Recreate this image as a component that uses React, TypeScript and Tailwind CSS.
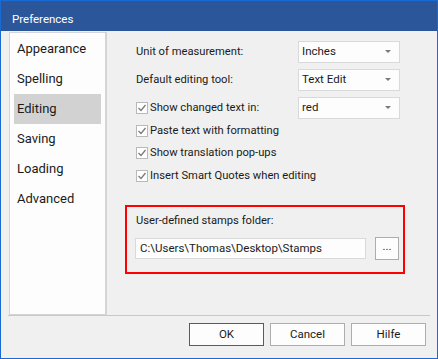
import React from "react";

const font = { fontFamily: 'Roboto, "Open Sans", Arial, sans-serif' };

function Dropdown({ value }: { value: string }) {
  return (
    <div className="w-[102px] h-[22px] bg-[#fdfdfd] border border-[#d9d9d9] flex items-center justify-between pl-[3px] pr-[8px] text-[11.5px] text-[#1b1b1b]">
      <span>{value}</span>
      <svg width="6" height="4" viewBox="0 0 6 4">
        <path d="M0 0 H6 L3 3 Z" fill="#7a7a7a" />
      </svg>
    </div>
  );
}

function Check() {
  return (
    <div className="w-[12px] h-[12px] border border-[#b9b9b9] bg-white flex items-center justify-center shrink-0">
      <svg width="10" height="10" viewBox="0 0 10 10">
        <path d="M1.5 5 L4 7.5 L8.5 2" stroke="#7a7a7a" strokeWidth="1.3" fill="none" />
      </svg>
    </div>
  );
}

function CheckRow({ label, className = "" }: { label: string; className?: string }) {
  return (
    <div className={"h-[22px] flex items-center " + className}>
      <Check />
      <span className="ml-[2px] text-[11.2px] text-[#1b1b1b]">{label}</span>
    </div>
  );
}

function Btn({ label, primary = false }: { label: string; primary?: boolean }) {
  return (
    <div
      className={
        "w-[75px] h-[23px] flex items-center justify-center bg-[#fdfdfd] text-[11.5px] text-[#1b1b1b] border " +
        (primary ? "border-[#1a66cc]" : "border-[#adadad]")
      }
    >
      {label}
    </div>
  );
}

export default function App() {
  const items = ["Appearance", "Spelling", "Editing", "Saving", "Loading", "Advanced"];
  return (
    <div style={font} className="w-[438px] h-[359px] border border-[#1a6ad4] bg-[#f0f0f0] flex flex-col overflow-hidden">
      <div className="h-[30px] bg-[#2b579a] flex items-center pl-[11px] pt-[8px] shrink-0">
        <span className="text-white text-[11.5px]">Preferences</span>
      </div>
      <div className="flex flex-1">
        <div className="ml-[8px] mt-[1px] w-[98px] h-[283px] bg-[#fdfdfd] border border-[#d4d4d4] border-r-2 pt-[1px] px-[4px] flex flex-col">
          {items.map((it) => (
            <div
              key={it}
              className={
                "h-[30px] flex items-center pl-[3px] text-[13px] text-[#1b1b1b] " +
                (it === "Editing" ? "bg-[#d2d2d2]" : "")
              }
            >
              {it}
            </div>
          ))}
        </div>
        <div className="pl-[18px] pt-[10px] flex flex-col">
          <div className="pl-[11px] flex flex-col">
            <div className="h-[22px] flex items-center">
              <span className="w-[162px] text-[11.2px] text-[#1b1b1b]">Unit of measurement:</span>
              <Dropdown value="Inches" />
            </div>
            <div className="h-[22px] flex items-center mt-[6px]">
              <span className="w-[162px] text-[11.2px] text-[#1b1b1b]">Default editing tool:</span>
              <Dropdown value="Text Edit" />
            </div>
            <div className="h-[22px] flex items-center mt-[6px]">
              <div className="w-[162px] flex items-center">
                <Check />
                <span className="ml-[2px] text-[11.2px] text-[#1b1b1b]">Show changed text in:</span>
              </div>
              <Dropdown value="red" />
            </div>
            <CheckRow label="Paste text with formatting" className="mt-[1px]" />
            <CheckRow label="Show translation pop-ups" />
            <CheckRow label="Insert Smart Quotes when editing" className="mt-[1px]" />
          </div>
          <div className="mt-[18px] w-[280px] h-[69px] border-2 border-[#ff0000] pl-[8px] pt-[6px] flex flex-col">
            <div className="h-[16px] flex items-center pl-[1px] text-[11.2px] text-[#1b1b1b]">User-defined stamps folder:</div>
            <div className="mt-[8px] flex items-center">
              <div className="w-[231px] h-[21px] bg-[#fdfdfd] border border-[#d9d9d9] flex items-center pl-[4px] text-[11.5px] text-[#1b1b1b]">
                C:\Users\Thomas\Desktop\Stamps
              </div>
              <div className="ml-[9px] w-[24px] h-[23px] bg-[#fdfdfd] border border-[#adadad] flex items-center justify-center text-[11.5px] text-[#1b1b1b] pb-[3px]">
                ...
              </div>
            </div>
          </div>
        </div>
      </div>
      <div className="mx-[7px] h-[1px] bg-[#c9c9c9] shrink-0" />
      <div className="h-[42px] flex items-start justify-end pr-[11px] pt-[7px] gap-[6px] shrink-0">
        <Btn label="OK" primary />
        <Btn label="Cancel" />
        <Btn label="Hilfe" />
      </div>
    </div>
  );
}
